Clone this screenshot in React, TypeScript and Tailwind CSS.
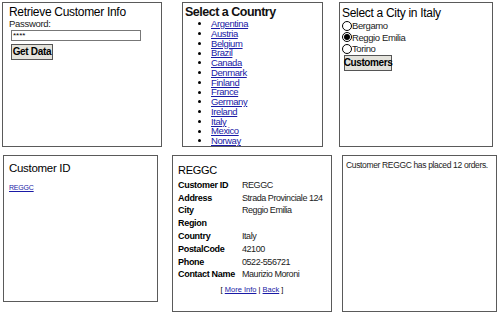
const countries = [
  'Argentina', 'Austria', 'Belgium', 'Brazil', 'Canada', 'Denmark', 'Finland',
  'France', 'Germany', 'Ireland', 'Italy', 'Mexico', 'Norway', 'Poland',
];

const cities = ['Bergamo', 'Reggio Emilia', 'Torino'];

const details: [string, string][] = [
  ['Customer ID', 'REGGC'],
  ['Address', 'Strada Provinciale 124'],
  ['City', 'Reggio Emilia'],
  ['Region', ''],
  ['Country', 'Italy'],
  ['PostalCode', '42100'],
  ['Phone', '0522-556721'],
  ['Contact Name', 'Maurizio Moroni'],
];

function Radio({ checked }: { checked: boolean }) {
  return (
    <span className="w-[10px] h-[10px] rounded-full border border-black bg-white flex items-center justify-center shrink-0">
      {checked && <span className="w-[6px] h-[6px] rounded-full bg-black" />}
    </span>
  );
}

export default function App() {
  return (
    <div className="w-[500px] h-[315px] bg-white text-black overflow-hidden whitespace-nowrap font-['Liberation_Sans',Arial,sans-serif] text-[10px] leading-none">
      <div className="flex pt-[2px] h-[147px]">
        <div className="ml-[2px] w-[160px] h-[145px] border border-[#5a5a5a] px-[6px] pt-[3px]">
          <div className="text-[12px] leading-[13px] tracking-[-0.3px]">Retrieve Customer Info</div>
          <div className="text-[9.5px] leading-[10px] text-[#222] tracking-[-0.3px]">Password:</div>
          <div className="ml-[2px] mt-[1px] w-[130px] h-[11px] border border-[#777] text-[8px] leading-[9px] pl-[1px]">****</div>
          <div className="ml-[2px] mt-[3px] w-[42px] h-[16px] border border-[#555] bg-[#e4e3dc] font-bold text-[10px] tracking-[-0.3px] flex items-center justify-center">
            Get Data
          </div>
        </div>

        <div className="ml-[20px] w-[141px] h-[145px] border border-[#5a5a5a] overflow-hidden pt-[3px] pl-[2px]">
          <div className="text-[12.5px] leading-[13px] font-bold tracking-[-0.5px] text-[#111]">Select a Country</div>
          <ul>
            {countries.map((c) => (
              <li key={c} className="flex items-center h-[9.75px] text-[9.5px] tracking-[-0.4px]">
                <span className="w-[3px] h-[3px] rounded-full bg-black ml-[13px] mr-[10px]" />
                <a href="#" className="text-[#1a1aa6] underline">{c}</a>
              </li>
            ))}
          </ul>
        </div>

        <div className="ml-[16px] w-[154px] h-[145px] border border-[#5a5a5a] pt-[4px] pl-[2px]">
          <div className="text-[12px] leading-[13px] tracking-[-0.3px]">Select a City in Italy</div>
          <div>
            {cities.map((c) => (
              <div key={c} className="flex items-center h-[11.5px] text-[9.5px] tracking-[-0.4px]">
                <Radio checked={c === 'Reggio Emilia'} />
                <span className="text-[#222]">{c}</span>
              </div>
            ))}
          </div>
          <div className="ml-[2px] w-[48px] h-[16px] border border-[#555] bg-[#e4e3dc] font-bold text-[10px] flex items-center justify-center tracking-[-0.4px]">
            Customers
          </div>
        </div>
      </div>

      <div className="flex mt-[8px]">
        <div className="ml-[3px] w-[155px] h-[147px] border border-[#5a5a5a] pt-[6px] pl-[5px]">
          <div className="text-[11.5px] leading-[13px] tracking-[-0.3px]">Customer ID</div>
          <a href="#" className="block mt-[9px] text-[7px] tracking-[-0.2px] text-[#1a1aa6] underline">REGGC</a>
        </div>

        <div className="ml-[14px] w-[160px] h-[157px] border border-[#5a5a5a] pt-[8px] pl-[5px]">
          <div className="text-[11px] leading-[12px] tracking-[-0.3px]">REGGC</div>
          <div className="mt-[3px]">
            {details.map(([k, v]) => (
              <div key={k} className="flex items-center h-[12.8px] text-[9px]">
                <span className="w-[64px] font-bold tracking-[-0.3px]">{k}</span>
                <span className="text-[#222] tracking-[-0.45px]">{v}</span>
              </div>
            ))}
          </div>
          <div className="mt-[5px] text-[7.5px] text-center pr-[5px]">
            [ <a href="#" className="text-[#1a1aa6] underline">More Info</a> | <a href="#" className="text-[#1a1aa6] underline">Back</a> ]
          </div>
        </div>

        <div className="ml-[10px] w-[155px] h-[157px] border border-[#5a5a5a] pt-[5px] pl-[3px]">
          <div className="text-[8.5px] tracking-[-0.35px] text-[#222]">Customer REGGC has placed 12 orders.</div>
        </div>
      </div>
    </div>
  );
}
